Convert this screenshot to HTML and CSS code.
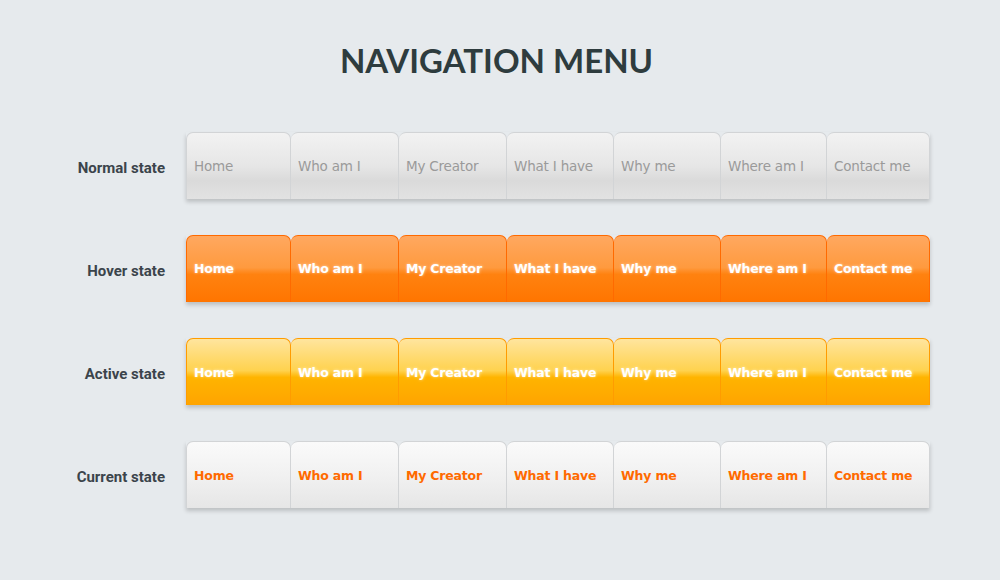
FILE: index.html
```html
<!DOCTYPE html>
<html lang="en">
<head>
  <meta charset="UTF-8" />
  <title>Navigation Menu</title>
  <link rel="stylesheet" href="styles.css">
</head>
<body>
  <div class="page">
    <h1 class="title">NAVIGATION MENU</h1>

    <div class="state-row">
      <div class="state-label">Normal state</div>
      <ul class="nav nav-normal">
        <li>Home</li><li>Who am I</li><li>My Creator</li><li>What I have</li><li>Why me</li><li>Where am I</li><li>Contact me</li>
      </ul>
    </div>

    <div class="state-row">
      <div class="state-label">Hover state</div>
      <ul class="nav nav-hover">
        <li>Home</li><li>Who am I</li><li>My Creator</li><li>What I have</li><li>Why me</li><li>Where am I</li><li>Contact me</li>
      </ul>
    </div>

    <div class="state-row">
      <div class="state-label">Active state</div>
      <ul class="nav nav-active">
        <li>Home</li><li>Who am I</li><li>My Creator</li><li>What I have</li><li>Why me</li><li>Where am I</li><li>Contact me</li>
      </ul>
    </div>

    <div class="state-row">
      <div class="state-label">Current state</div>
      <ul class="nav nav-current">
        <li>Home</li><li>Who am I</li><li>My Creator</li><li>What I have</li><li>Why me</li><li>Where am I</li><li>Contact me</li>
      </ul>
    </div>
  </div>
</body>
</html>
```

FILE: styles.css
```css
* {
  margin: 0;
  padding: 0;
  box-sizing: border-box;
}

body {
  background: #e6eaed;
  font-family: Roboto, 'Liberation Sans', sans-serif;
  width: 1000px;
  height: 580px;
  overflow: hidden;
}

.page {
  padding-top: 39px;
}

.title {
  font-family: Lato, 'Liberation Sans', sans-serif;
  font-weight: 700;
  font-size: 33px;
  line-height: 42px;
  color: #2e3c3e;
  text-align: center;
  margin-bottom: 51px;
  padding-right: 7px;
}

.state-row {
  display: flex;
  align-items: center;
  gap: 21px;
  margin-bottom: 36px;
}

.state-label {
  width: 165px;
  padding-top: 4px;
  text-align: right;
  font-size: 15px;
  font-weight: 700;
  color: #3b444b;
}

.nav {
  list-style: none;
  display: grid;
  grid-template-columns: 105px 108px 108px 107px 107px 106px 103px;
  width: 744px;
  height: 67px;
  box-shadow: 0 3px 4px rgba(0, 0, 0, 0.18);
}

.nav li {
  display: flex;
  align-items: center;
  padding-left: 7px;
  font-family: 'DejaVu Sans', Verdana, sans-serif;
  font-size: 12.5px;
  letter-spacing: -0.2px;
  border: 1px solid #d2d4d6;
  border-bottom: none;
  border-left: none;
  border-radius: 7px 7px 0 0;
}

.nav li:first-child {
  border-left: 1px solid #d2d4d6;
}

.nav-normal li {
  color: #9a9a9a;
  font-size: 13.5px;
  background: linear-gradient(#f2f2f2 0%, #e6e6e6 50%, #dadada 72%, #e2e2e2 100%);
}

.nav-hover li,
.nav-hover li:first-child {
  color: #ffffff;
  font-weight: 700;
  padding-bottom: 2px;
  text-shadow: 0 0 3px rgba(255, 255, 255, 0.6);
  border-color: #ff6a00;
  background: linear-gradient(#ffa860 0%, #ff9a3e 48%, #ff8210 58%, #ff7500 100%);
}

.nav-active li,
.nav-active li:first-child {
  color: #ffffff;
  font-weight: 700;
  text-shadow: 0 0 3px rgba(255, 255, 255, 0.6);
  border-color: #ff9c00;
  background: linear-gradient(#ffe59e 0%, #ffd24e 48%, #ffb400 58%, #ffa400 100%);
}

.nav-current li {
  color: #ff6a00;
  font-weight: 700;
  background: linear-gradient(#fafafa 0%, #f1f1f1 50%, #e6e6e6 100%);
}
```
